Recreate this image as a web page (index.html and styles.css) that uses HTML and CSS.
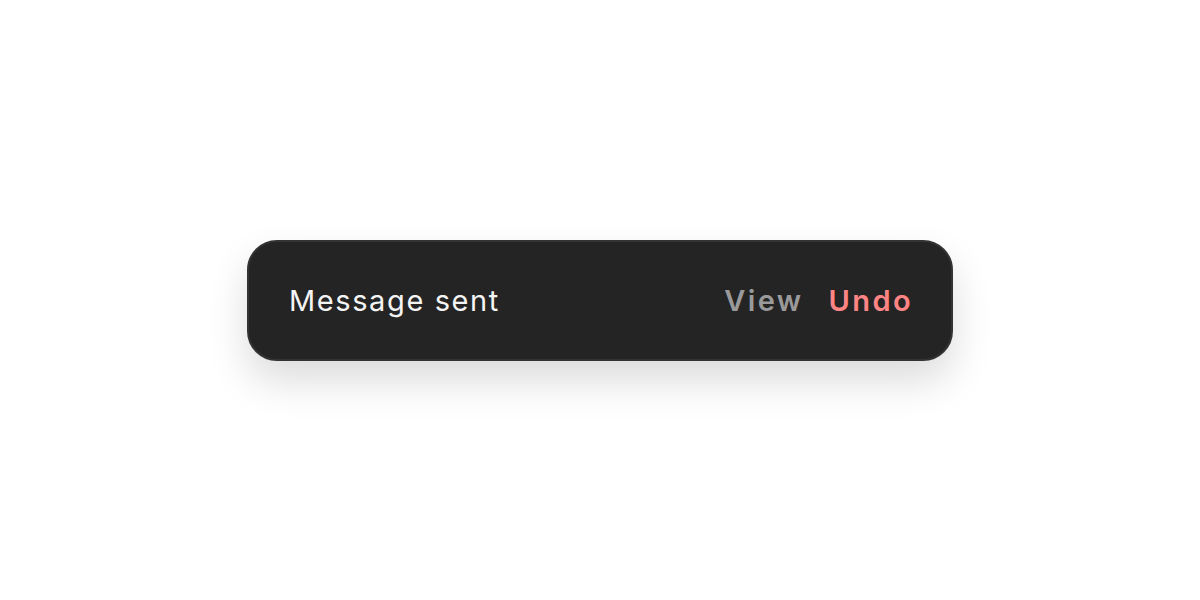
FILE: index.html
```html
<!DOCTYPE html>
<html lang="en">
<head>
<meta charset="utf-8">
<title>Toast</title>
<link rel="stylesheet" href="styles.css">
</head>
<body>
  <main class="stage">
    <div class="toast" role="status">
      <span class="toast-message">Message sent</span>
      <div class="toast-actions">
        <button class="toast-btn toast-btn--view" type="button">View</button>
        <button class="toast-btn toast-btn--undo" type="button">Undo</button>
      </div>
    </div>
  </main>
</body>
</html>
```
FILE: styles.css
```css
html, body {
  margin: 0;
  padding: 0;
  background: #ffffff;
}

.stage {
  width: 1200px;
  height: 600px;
  display: flex;
  align-items: center;
  justify-content: center;
  font-family: Inter, "Liberation Sans", sans-serif;
}

.toast {
  box-sizing: border-box;
  width: 706px;
  height: 121px;
  padding: 0 38px 0 40px;
  display: flex;
  align-items: center;
  justify-content: space-between;
  background: #242424;
  border: 2px solid #333333;
  border-radius: 30px;
  box-shadow: 0 20px 40px rgba(0, 0, 0, 0.14);
}

.toast-message {
  color: #f4f4f4;
  font-size: 29px;
  font-weight: 400;
  letter-spacing: 1.6px;
  line-height: 1;
}

.toast-actions {
  display: flex;
  align-items: center;
  gap: 25px;
}

.toast-btn {
  background: none;
  border: 0;
  padding: 0;
  font-family: inherit;
  font-size: 29px;
  font-weight: 600;
  letter-spacing: 2.4px;
  line-height: 1;
  cursor: pointer;
}

.toast-btn--view {
  color: #9a9a9a;
}

.toast-btn--undo {
  color: #ff8585;
}
```
